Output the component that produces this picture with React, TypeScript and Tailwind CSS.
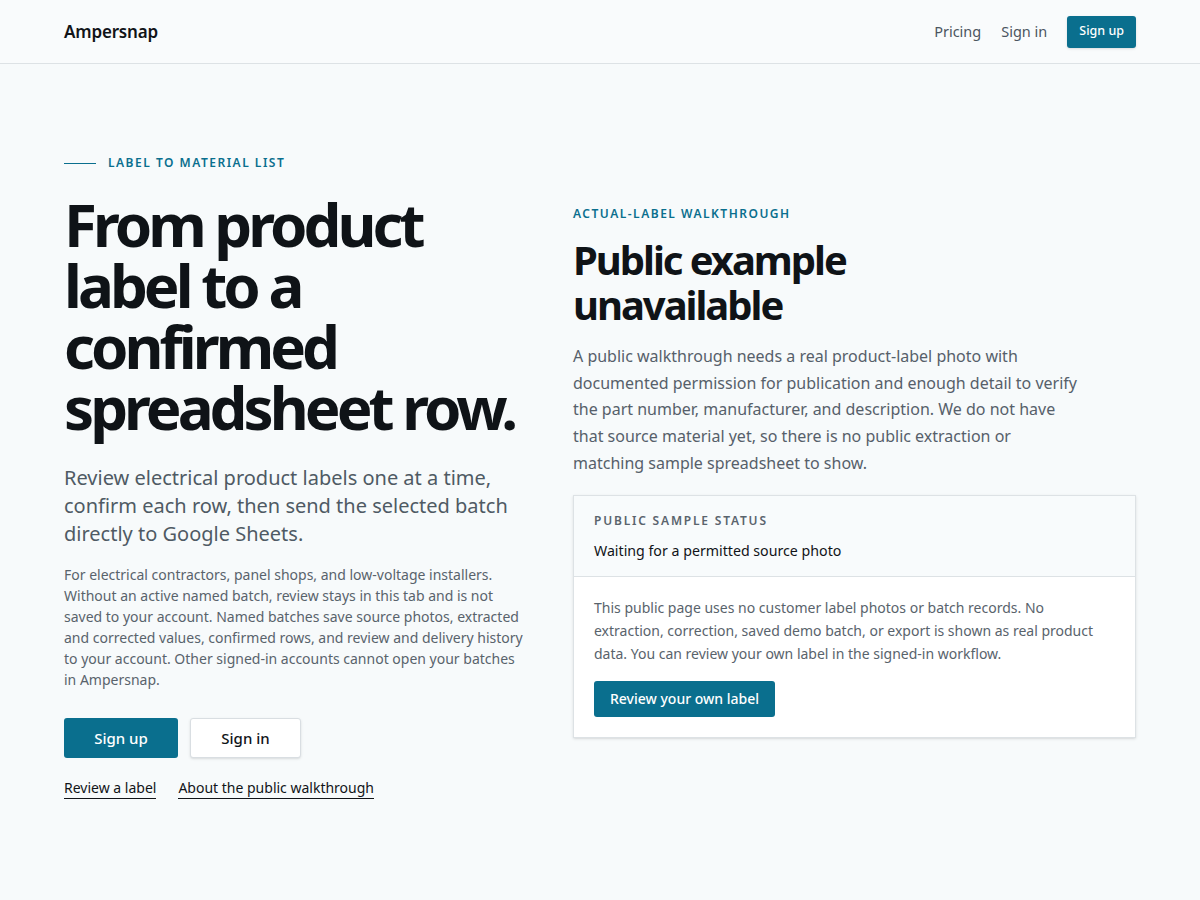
import React from 'react'

const App: React.FC = ()=>{
  return (
    <div className="min-h-screen bg-[#f7fafb] text-[#111418]" style={{fontFamily: '"Noto Sans", sans-serif'}}>
      <header className="h-16 border-b border-[#dde2e5] bg-[#f9fbfc]">
        <div className="mx-auto flex h-full max-w-[1072px] items-center justify-between">
          <a className="text-[17px] font-semibold tracking-[-0.01em] text-[#111418]">Ampersnap</a>
          <nav className="flex items-center gap-5 text-[14.5px] text-[#4b5560]">
            <a>Pricing</a>
            <a>Sign in</a>
            <a className="flex h-8 items-center rounded-[3px] bg-[#0a6f8e] px-3 text-[12.5px] font-medium text-white shadow-sm">Sign up</a>
          </nav>
        </div>
      </header>

      <main className="mx-auto grid max-w-[1072px] grid-cols-[461px_1fr] gap-12 pt-[90px] pb-24">
        <section>
          <div className="flex items-center gap-3">
            <span className="h-px w-8 bg-[#0a6f8e]"></span>
            <span className="text-[12px] font-semibold uppercase tracking-[0.125em] text-[#0a6f8e]">Label to material list</span>
          </div>
          <h1 className="mt-[22px] text-[60px] font-bold leading-[61px] tracking-[-0.066em] text-[#0f1317]">
            From product label to a confirmed spreadsheet row.
          </h1>
          <p className="mt-[26px] text-[20px] leading-[28px] text-[#4f5a64]">
            Review electrical product labels one at a time, confirm each row, then send the selected batch directly to Google Sheets.
          </p>
          <p className="mt-4 text-[14px] leading-[21px] text-[#59636c]">
            For electrical contractors, panel shops, and low-voltage installers. Without an active named batch, review stays in this tab and is not saved to your account. Named batches save source photos, extracted and corrected values, confirmed rows, and review and delivery history to your account. Other signed-in accounts cannot open your batches in Ampersnap.
          </p>
          <div className="mt-7 flex gap-3">
            <button className="h-10 w-[114px] rounded-[3px] bg-[#0a6f8e] text-[15px] font-medium text-white">Sign up</button>
            <button className="h-10 w-[111px] rounded-[3px] border border-[#d9dee2] bg-white text-[15px] font-medium text-[#111418] shadow-sm">Sign in</button>
          </div>
          <div className="mt-[21px] flex gap-[22px] text-[14px] text-[#111418]">
            <a className="border-b border-[#111418] pb-px leading-[18px]">Review a label</a>
            <a className="border-b border-[#111418] pb-px leading-[18px]">About the public walkthrough</a>
          </div>
        </section>

        <section className="pt-[51px]">
          <div className="text-[12px] font-semibold uppercase tracking-[0.125em] text-[#0a6f8e]">Actual-label walkthrough</div>
          <h2 className="mt-[14px] text-[40px] font-bold leading-[45px] tracking-[-0.051em] text-[#0f1317]">
            Public example<br />unavailable
          </h2>
          <p className="mt-[16px] max-w-[510px] text-[16px] leading-[26.7px] text-[#56606a]">
            A public walkthrough needs a real product-label photo with documented permission for publication and enough detail to verify the part number, manufacturer, and description. We do not have that source material yet, so there is no public extraction or matching sample spreadsheet to show.
          </p>
          <div className="mt-[18px] border border-[#dde2e5] bg-white shadow-sm">
            <div className="border-b border-[#dde2e5] bg-[#f8fbfc] px-5 pt-[16px] pb-[15px]">
              <div className="text-[12px] font-semibold uppercase tracking-[0.15em] text-[#5a646d]">Public sample status</div>
              <div className="mt-[10px] text-[14.2px] text-[#111418]">Waiting for a permitted source photo</div>
            </div>
            <div className="px-5 pt-[19px] pb-5">
              <p className="text-[14px] leading-[23px] text-[#59636c]">
                This public page uses no customer label photos or batch records. No extraction, correction, saved demo batch, or export is shown as real product data. You can review your own label in the signed-in workflow.
              </p>
              <button className="mt-4 h-9 rounded-[3px] bg-[#0a6f8e] px-4 text-[14px] font-medium text-white">Review your own label</button>
            </div>
          </div>
        </section>
      </main>
    </div>
  )
}

export default App
